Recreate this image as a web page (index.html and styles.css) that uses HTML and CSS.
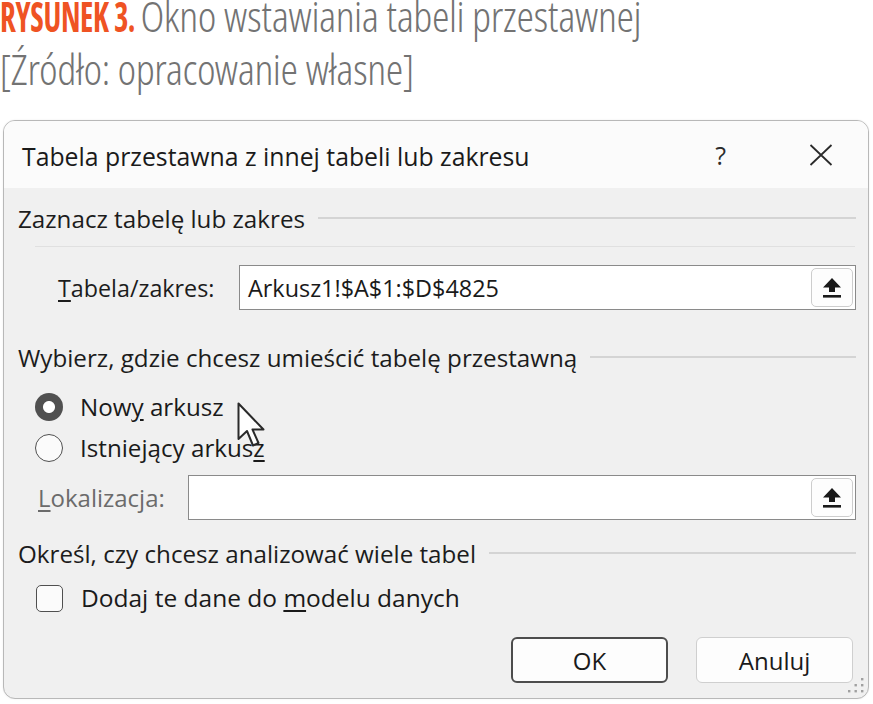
FILE: index.html
```html
<!DOCTYPE html>
<html lang="pl">
<head>
<meta charset="utf-8">
<link rel="stylesheet" href="styles.css">
</head>
<body>
<div class="caption">
  <div class="cap-line"><span class="cap-num">RYSUNEK 3.</span> <span class="cap-text">Okno wstawiania tabeli przestawnej</span></div>
  <div class="cap-line"><span class="cap-text">[Źródło: opracowanie własne]</span></div>
</div>

<div class="dialog">
  <div class="titlebar">
    <div class="title">Tabela przestawna z innej tabeli lub zakresu</div>
    <div class="tb-buttons">
      <span class="help">?</span>
      <svg class="close" width="24" height="22" viewBox="0 0 24 22"><path d="M1.5 1 L22.5 21 M22.5 1 L1.5 21" stroke="#2b2b2b" stroke-width="1.8" fill="none"/></svg>
    </div>
  </div>
  <div class="body">
    <div class="group-head"><span>Zaznacz tabelę lub zakres</span><i class="rule"></i></div>
    <div class="sep"></div>
    <div class="field-row range-row">
      <label class="field-label"><u>T</u>abela/zakres:</label>
      <div class="input">
        <span class="input-text">Arkusz1!$A$1:$D$4825</span>
        <span class="pick"><svg width="20" height="22" viewBox="0 0 20 22"><path d="M10 1 L19 10.5 L13 10.5 L13 15 L7 15 L7 10.5 L1 10.5 Z" fill="#1a1a1a"/><rect x="1" y="18" width="18" height="2.6" fill="#1a1a1a"/></svg></span>
      </div>
    </div>
    <div class="group-head head2"><span>Wybierz, gdzie chcesz umieścić tabelę przestawną</span><i class="rule"></i></div>
    <div class="option first"><span class="radio checked"></span><span class="opt-label">Now<u>y</u> arkusz</span></div>
    <div class="option second"><span class="radio"></span><span class="opt-label">Istniejący arkus<u>z</u></span></div>
    <div class="field-row loc-row">
      <label class="field-label disabled"><u>L</u>okalizacja:</label>
      <div class="input">
        <span class="input-text"></span>
        <span class="pick"><svg width="20" height="22" viewBox="0 0 20 22"><path d="M10 1 L19 10.5 L13 10.5 L13 15 L7 15 L7 10.5 L1 10.5 Z" fill="#1a1a1a"/><rect x="1" y="18" width="18" height="2.6" fill="#1a1a1a"/></svg></span>
      </div>
    </div>
    <div class="group-head head3"><span>Określ, czy chcesz analizować wiele tabel</span><i class="rule"></i></div>
    <div class="option check-row"><span class="checkbox"></span><span class="opt-label">Dodaj te dane do <u>m</u>odelu danych</span></div>
    <div class="buttons">
      <button class="btn default">OK</button>
      <button class="btn">Anuluj</button>
    </div>
  </div>
  <svg class="grip" width="18" height="18" viewBox="0 0 18 18">
    <rect x="14" y="2" width="2.4" height="2.4" fill="#a0a0a0"/>
    <rect x="7.5" y="8" width="2.4" height="2.4" fill="#a0a0a0"/>
    <rect x="14" y="8" width="2.4" height="2.4" fill="#a0a0a0"/>
    <rect x="1" y="14" width="2.4" height="2.4" fill="#a0a0a0"/>
    <rect x="7.5" y="14" width="2.4" height="2.4" fill="#a0a0a0"/>
    <rect x="14" y="14" width="2.4" height="2.4" fill="#a0a0a0"/>
  </svg>
</div>

<svg class="cursor" width="30" height="48" viewBox="0 0 30 48">
  <path d="M1.5 1.5 L1.5 37 L10 29 L16 43.5 L21.5 41 L15.5 27.5 L26.5 27.5 Z" fill="#ffffff" stroke="#2a2a2a" stroke-width="2" stroke-linejoin="round"/>
</svg>
</body>
</html>
```
FILE: styles.css
```css
html, body {
  margin: 0;
  padding: 0;
  background: #ffffff;
}
body {
  width: 873px;
  height: 704px;
  position: relative;
  overflow: hidden;
  font-family: "Open Sans", "Noto Sans", sans-serif;
  color: #1b1b1b;
}

/* caption */
.caption {
  margin-top: -11px;
  font-family: "Noto Sans Display", "Roboto Condensed", sans-serif;
  font-stretch: 62.5%;
  font-size: 42px;
  line-height: 53px;
  white-space: nowrap;
  transform: scaleX(0.86);
  transform-origin: 0 0;
}
.cap-num {
  display: inline-block;
  color: #ef5323;
  font-weight: 700;
  letter-spacing: -0.5px;
  transform: scaleX(0.756);
  transform-origin: 0 0;
  margin-right: -53px;
}
.cap-text {
  color: #737373;
  font-weight: 300;
}

/* dialog */
.dialog {
  position: relative;
  margin: 25px 0 0 3px;
  width: 864px;
  height: 577px;
  border: 1.5px solid #b8b8b8;
  border-radius: 12px;
  overflow: hidden;
  background: #f0f0f0;
  box-shadow: 0 0 2px rgba(0,0,0,0.08);
}
.titlebar {
  height: 67px;
  background: #fbfbfb;
  display: flex;
  align-items: center;
  padding: 0 35px 0 18px;
}
.title {
  font-size: 24.8px;
  color: #1a1a1a;
  padding-top: 2px;
}
.tb-buttons {
  margin-left: auto;
  display: flex;
  align-items: center;
  gap: 83px;
}
.help {
  font-size: 25px;
  color: #2b2b2b;
}
.close {
  display: block;
}

.body {
  padding: 15px 12px 0 14px;
}
.group-head {
  height: 30px;
  display: flex;
  align-items: center;
  font-size: 24.2px;
  color: #1c1c1c;
  white-space: nowrap;
}
.group-head .rule {
  flex: 1;
  height: 1.5px;
  background: #d4d4d4;
  margin-left: 13px;
}
.sep {
  margin: 13px 1px 0 17px;
  height: 1px;
  background: #e0e0e0;
}

.field-row {
  display: grid;
  align-items: center;
}
.range-row {
  margin-top: 18px;
  height: 45px;
  grid-template-columns: 221px 1fr;
}
.range-row .field-label {
  padding-left: 40px;
  font-size: 23.3px;
}
.loc-row {
  margin-top: 9px;
  height: 44px;
  grid-template-columns: 170px 1fr;
}
.loc-row .field-label {
  padding-left: 20px;
}
.field-label {
  font-size: 24px;
  color: #1c1c1c;
  white-space: nowrap;
}
.field-label.disabled {
  color: #6b6b6b;
}
.field-label u, .opt-label u {
  text-decoration-thickness: 2px;
  text-underline-offset: 3px;
}
.input {
  height: 100%;
  box-sizing: border-box;
  border: 1.5px solid #8a8a8a;
  background: #ffffff;
  display: flex;
  align-items: center;
  padding: 2px 2px 2px 8px;
}
.input-text {
  flex: 1;
  font-size: 23.4px;
  color: #1a1a1a;
  white-space: nowrap;
}
.pick {
  width: 42px;
  height: 39px;
  box-sizing: border-box;
  border: 1px solid #cdcdcd;
  border-radius: 5px;
  background: #fdfdfd;
  display: flex;
  align-items: center;
  justify-content: center;
}
.pick svg {
  display: block;
}

.head2 {
  margin-top: 32px;
}
.head3 {
  margin-top: 19px;
}

.option {
  height: 36px;
  display: flex;
  align-items: center;
}
.option.first {
  margin-top: 17px;
}
.option.second {
  margin-top: 5px;
}
.radio {
  width: 28px;
  height: 28px;
  box-sizing: border-box;
  border-radius: 50%;
  border: 1.6px solid #505050;
  background: #fbfbfb;
  margin-left: 17px;
  margin-right: 17px;
  flex: none;
}
.radio.checked {
  border: none;
  background: radial-gradient(circle, #ffffff 0 5.5px, #505050 6.5px);
}
.opt-label {
  font-size: 24.2px;
  color: #1a1a1a;
  white-space: nowrap;
  padding-bottom: 2px;
}
.check-row {
  margin-top: 12px;
}
.check-row .opt-label {
  font-size: 24.5px;
}
.checkbox {
  width: 27px;
  height: 27px;
  box-sizing: border-box;
  border: 1.6px solid #505050;
  border-radius: 5px;
  background: #fbfbfb;
  margin-left: 18px;
  margin-right: 18px;
  flex: none;
}

.buttons {
  margin-top: 21px;
  display: flex;
  justify-content: flex-end;
  gap: 28px;
  padding-right: 3px;
}
.btn {
  width: 157px;
  height: 46px;
  box-sizing: border-box;
  border: 1px solid #cfcfcf;
  border-radius: 6px;
  background: #fdfdfd;
  font-family: "Open Sans", "Noto Sans", sans-serif;
  font-size: 24px;
  color: #1a1a1a;
  padding: 0;
}
.btn.default {
  border: 2px solid #4d4d4d;
}

.grip {
  position: absolute;
  right: 3px;
  bottom: 4px;
}
.cursor {
  position: absolute;
  left: 237px;
  top: 402px;
}
```
